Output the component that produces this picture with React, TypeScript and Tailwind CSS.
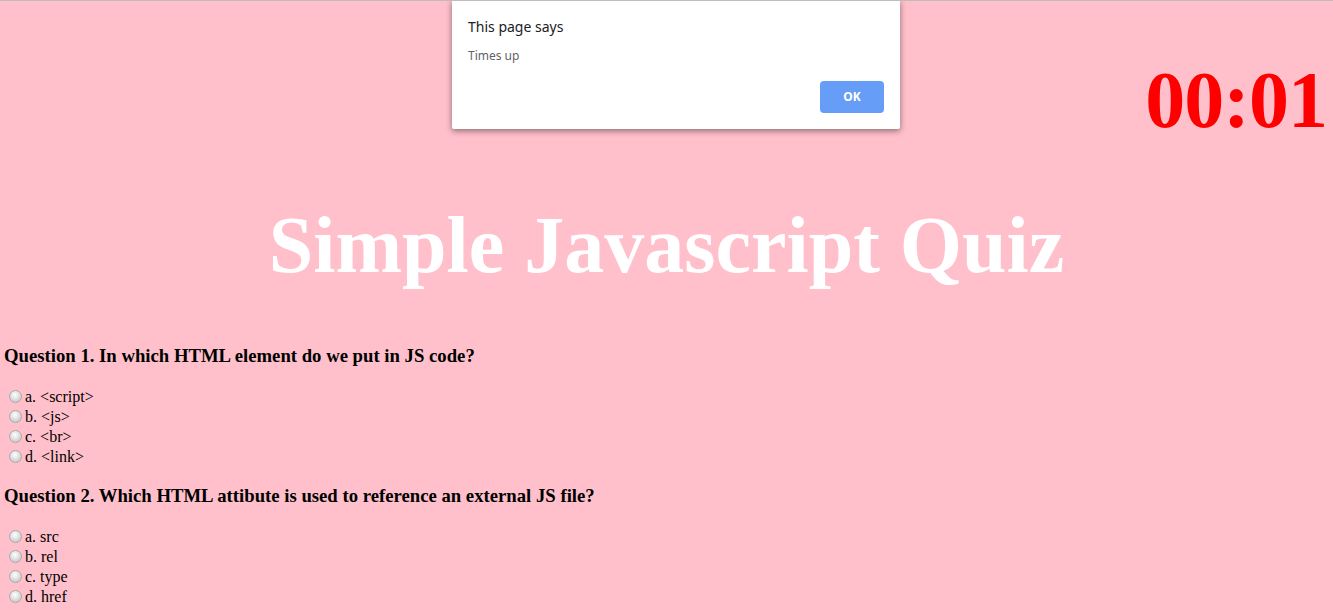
import React from "react";

const questions = [
  {
    q: "Question 1. In which HTML element do we put in JS code?",
    options: ["a. <script>", "b. <js>", "c. <br>", "d. <link>"],
  },
  {
    q: "Question 2. Which HTML attibute is used to reference an external JS file?",
    options: ["a. src", "b. rel", "c. type", "d. href"],
  },
];

const Radio = () => (
  <span className="mt-[3px] ml-[5px] mr-[3px] inline-block h-[13px] w-[13px] shrink-0 rounded-full border border-[#a9a9a9] bg-[radial-gradient(circle_at_45%_35%,#ffffff,#d6d6d6_60%,#bdbdbd)]" />
);

const App = () => {
  return (
    <div className="relative min-h-[616px] w-full bg-[#ffc0cb] border-t border-[#bdbdbd] font-['Liberation_Serif',serif] text-black overflow-hidden">
      {/* timer */}
      <div className="flex justify-end pr-[6px] pt-[55px]">
        <span className="text-[80px] font-bold leading-[89px] tracking-[-1px] text-[#ff0000]">00:01</span>
      </div>

      <h1 className="mt-[56px] text-center text-[80px] font-bold leading-[89px] text-white">
        Simple Javascript Quiz
      </h1>

      <div className="px-1 mt-[55px]">
        {questions.map((item, i) => (
          <div key={i} className={i === 0 ? "" : "mt-[18px]"}>
            <h3 className="text-[18.72px] font-bold leading-[21px]">{item.q}</h3>
            <div className="mt-[21px] flex flex-col">
              {item.options.map((opt) => (
                <label key={opt} className="flex items-start text-[16px] leading-[20px]">
                  <Radio />
                  <span>{opt}</span>
                </label>
              ))}
            </div>
          </div>
        ))}
      </div>

      {/* alert dialog */}
      <div className="absolute left-[452px] top-[-1px] h-[129px] w-[448px] rounded-b-[2px] bg-white shadow-[0_2px_6px_rgba(0,0,0,0.45)] font-['Noto_Sans',sans-serif]">
        <div className="px-4 pt-[17px]">
          <div className="text-[14px] leading-[20px] text-[#202124]">This page says</div>
          <div className="mt-[11px] text-[12px] leading-[16px] text-[#5f6368]">Times up</div>
          <div className="mt-[17px] flex justify-end">
            <button className="h-[32px] w-[64px] rounded-[4px] bg-[#669df6] text-[12px] font-bold text-white">
              OK
            </button>
          </div>
        </div>
      </div>
    </div>
  );
};

export default App;
